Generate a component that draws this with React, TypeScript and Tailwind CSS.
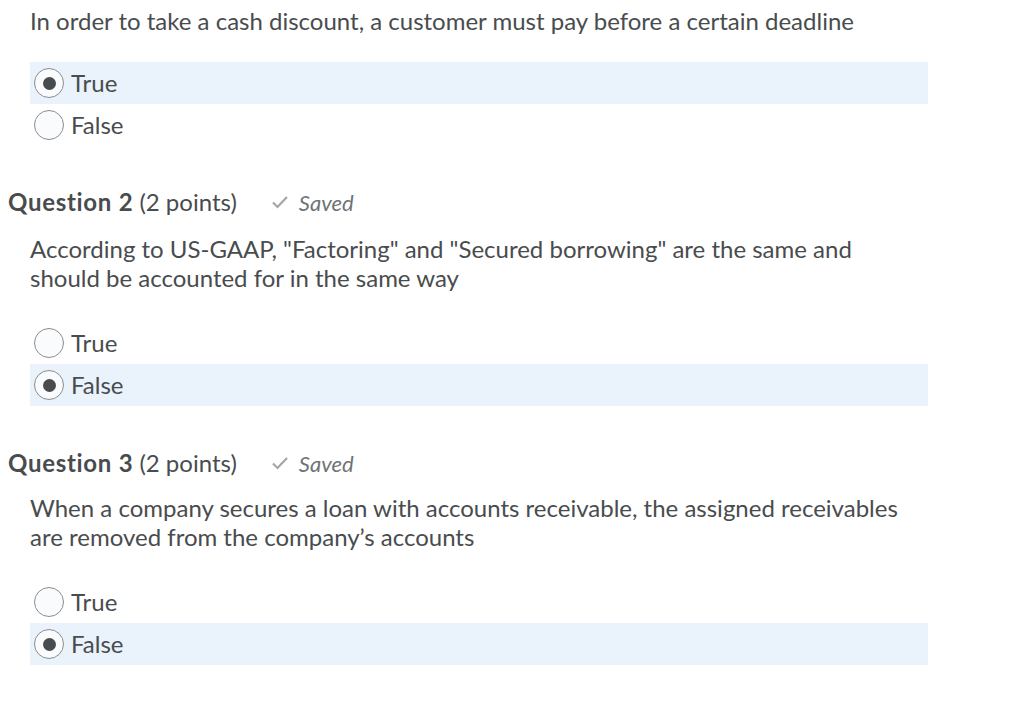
import React from 'react';

type Option = { label: string; selected: boolean };

const Radio: React.FC<Option> = ({ label, selected }) => (
  <div
    className={`flex h-[42px] items-center pl-1 ${selected ? 'bg-[#eaf2fc]' : ''}`}
  >
    <span className="flex h-[30px] w-[30px] shrink-0 items-center justify-center rounded-full border-[1.5px] border-[#8a8d90] bg-[#fafbfd]">
      {selected && <span className="h-[13px] w-[13px] rounded-full bg-[#494c4e]" />}
    </span>
    <span className="ml-[7px] text-[24px] leading-none text-[#494c4e]">{label}</span>
  </div>
);

const Header: React.FC<{ num: number }> = ({ num }) => (
  <div className="flex h-[30px] items-center pl-2">
    <span className="text-[24px] text-[#494c4e]">
      <span className="font-bold tracking-[0.7px]">Question {num}</span> (2 points)
    </span>
    <span className="ml-[34px] flex items-center text-[#6e7376]">
      <svg width="18" height="14" viewBox="0 0 18 14" className="mb-[1px]">
        <path d="M2 7.5 L6.5 12 L16 2" fill="none" stroke="#a3a7ab" strokeWidth="2.2" />
      </svg>
      <span className="ml-[10px] text-[22px] italic">Saved</span>
    </span>
  </div>
);

const Question: React.FC<{ text: string[]; options: Option[]; gap?: string }> = ({
  text,
  options,
  gap = 'mt-[30px]',
}) => (
  <div className="pl-[30px] pr-12">
    <div className="text-[24px] leading-[29px] text-[#494c4e]">
      {text.map((t) => (
        <div key={t}>{t}</div>
      ))}
    </div>
    <div className={`${gap} w-[898px]`}>
      {options.map((o) => (
        <Radio key={o.label} {...o} />
      ))}
    </div>
  </div>
);

export default function App() {
  return (
    <div className="min-h-[703px] bg-white pt-[6px] font-['Lato',sans-serif]">
      <Question
        gap="mt-[27px]"
        text={['In order to take a cash discount, a customer must pay before a certain deadline']}
        options={[
          { label: 'True', selected: true },
          { label: 'False', selected: false },
        ]}
      />
      <div className="mt-[41px]">
        <Header num={2} />
      </div>
      <div className="mt-[17px]">
        <Question
          text={[
            'According to US-GAAP, "Factoring" and "Secured borrowing" are the same and',
            'should be accounted for in the same way',
          ]}
          options={[
            { label: 'True', selected: false },
            { label: 'False', selected: true },
          ]}
        />
      </div>
      <div className="mt-[42px]">
        <Header num={3} />
      </div>
      <div className="mt-[15px]">
        <Question
          text={[
            'When a company secures a loan with accounts receivable, the assigned receivables',
            'are removed from the company\u2019s accounts',
          ]}
          options={[
            { label: 'True', selected: false },
            { label: 'False', selected: true },
          ]}
        />
      </div>
    </div>
  );
}
